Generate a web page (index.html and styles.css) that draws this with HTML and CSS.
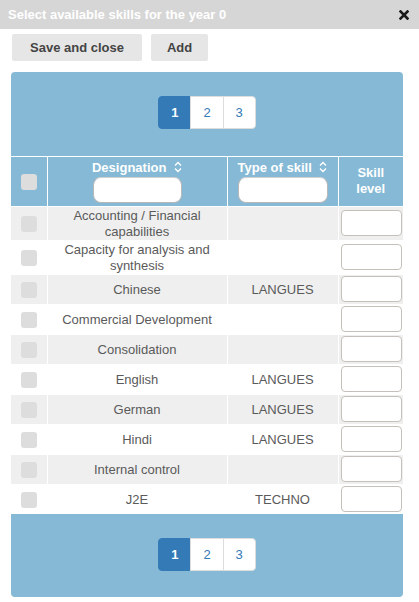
FILE: index.html
```html
<!DOCTYPE html>
<html>
<head>
<meta charset="utf-8">
<link rel="stylesheet" href="styles.css">
</head>
<body>
<div class="titlebar">
  <span class="title">Select available skills for the year 0</span>
  <svg class="close" width="10" height="10" viewBox="0 0 10 10"><path d="M1.5 1.5 L8.5 8.5 M8.5 1.5 L1.5 8.5" stroke="#1a1a1a" stroke-width="2.6" stroke-linecap="square"/></svg>
</div>
<div class="toolbar">
  <button class="btn btn-wide">Save and close</button>
  <button class="btn">Add</button>
</div>
<div class="wrap">
  <div class="pager-panel top">
    <div class="pagination">
      <span class="page active">1</span><span class="page">2</span><span class="page">3</span>
    </div>
  </div>
  <table class="grid">
    <colgroup><col class="c1"><col class="c2"><col class="c3"><col class="c4"></colgroup>
    <thead>
      <tr>
        <th class="chk"><span class="box"></span></th>
        <th><div class="lbl">Designation <svg class="sort" width="8" height="12" viewBox="0 0 8 12"><path d="M1 4.5 L4 1.5 L7 4.5 M1 7.5 L4 10.5 L7 7.5" stroke="#fff" stroke-width="1.4" fill="none"/></svg></div><input class="filter f1" type="text"></th>
        <th><div class="lbl">Type of skill <svg class="sort" width="8" height="12" viewBox="0 0 8 12"><path d="M1 4.5 L4 1.5 L7 4.5 M1 7.5 L4 10.5 L7 7.5" stroke="#fff" stroke-width="1.4" fill="none"/></svg></div><input class="filter f2" type="text"></th>
        <th class="lvl">Skill<br>level</th>
      </tr>
    </thead>
    <tbody>
      <tr><td class="chk"><span class="box"></span></td><td>Accounting / Financial capabilities</td><td></td><td class="inp"><input type="text"></td></tr>
      <tr><td class="chk"><span class="box"></span></td><td>Capacity for analysis and synthesis</td><td></td><td class="inp"><input type="text"></td></tr>
      <tr><td class="chk"><span class="box"></span></td><td>Chinese</td><td>LANGUES</td><td class="inp"><input type="text"></td></tr>
      <tr><td class="chk"><span class="box"></span></td><td>Commercial Development</td><td></td><td class="inp"><input type="text"></td></tr>
      <tr><td class="chk"><span class="box"></span></td><td>Consolidation</td><td></td><td class="inp"><input type="text"></td></tr>
      <tr><td class="chk"><span class="box"></span></td><td>English</td><td>LANGUES</td><td class="inp"><input type="text"></td></tr>
      <tr><td class="chk"><span class="box"></span></td><td>German</td><td>LANGUES</td><td class="inp"><input type="text"></td></tr>
      <tr><td class="chk"><span class="box"></span></td><td>Hindi</td><td>LANGUES</td><td class="inp"><input type="text"></td></tr>
      <tr><td class="chk"><span class="box"></span></td><td>Internal control</td><td></td><td class="inp"><input type="text"></td></tr>
      <tr><td class="chk"><span class="box"></span></td><td>J2E</td><td>TECHNO</td><td class="inp"><input type="text"></td></tr>
    </tbody>
  </table>
  <div class="pager-panel bottom">
    <div class="pagination">
      <span class="page active">1</span><span class="page">2</span><span class="page">3</span>
    </div>
  </div>
</div>
</body>
</html>
```
FILE: styles.css
```css
body {
  margin: 0;
  font-family: "Liberation Sans", Arial, sans-serif;
  font-size: 13px;
  background: #fff;
}
.titlebar {
  height: 29px;
  background: #d6d6d6;
  color: #fff;
  font-weight: bold;
  font-size: 13px;
  display: flex;
  align-items: center;
  justify-content: space-between;
  padding: 0 10px 0 8px;
}
.close { display: block; }
.toolbar {
  display: flex;
  gap: 9px;
  padding: 5px 12px 0;
}
.btn {
  height: 27px;
  padding: 0 16px;
  background: #e6e6e6;
  border: none;
  border-radius: 2px;
  color: #444;
  font-family: "Liberation Sans", Arial, sans-serif;
  font-weight: bold;
  font-size: 13px;
}
.btn-wide { padding: 0 18px; }
.wrap {
  width: 392px;
  margin: 11px 0 0 11px;
}
.pager-panel {
  background: #85b9d5;
}
.pager-panel.top {
  padding: 24px 0 27px;
  border-radius: 4px 4px 0 0;
  border-bottom: 1px solid #fff;
}
.pager-panel.bottom {
  padding: 24px 0 26px;
  border-radius: 0 0 4px 4px;
}
.pagination {
  display: flex;
  justify-content: center;
}
.page {
  display: block;
  padding: 6px 12px;
  line-height: 19px;
  font-size: 13px;
  color: #337ab7;
  background: #fff;
  border: 1px solid #ddd;
  margin-left: -1px;
}
.page:first-child { border-radius: 4px 0 0 4px; margin-left: 0; }
.page:last-child { border-radius: 0 4px 4px 0; }
.page.active {
  background: #337ab7;
  border-color: #337ab7;
  color: #fff;
  font-weight: bold;
}
.grid {
  width: 392px;
  border-collapse: collapse;
  border-style: hidden;
  table-layout: fixed;
}
.c1 { width: 36px; }
.c2 { width: 180px; }
.c3 { width: 111px; }
.c4 { width: 65px; }
.grid th, .grid td {
  border: 1px solid #fff;
  text-align: center;
}
.grid th {
  background: #85b9d5;
  color: #fff;
  font-weight: bold;
  padding: 3px 2px 3px;
  line-height: 16px;
  vertical-align: middle;
}
.grid th.lvl { line-height: 16px; padding-top: 2px; }
.lbl { line-height: 16px; height: 16px; }
.sort { vertical-align: -1px; margin-left: 4px; }
.filter {
  display: block;
  margin: 1px auto 0;
  height: 26px;
  box-sizing: border-box;
  border: 1px solid #b8b8b8;
  border-top-color: #d0d0d0;
  border-radius: 8px;
  background: #fff;
}
.f1 { width: 89px; }
.f2 { width: 90px; }
.grid td {
  color: #5a5a5a;
  padding: 1px 4px 0;
  line-height: 16px;
  vertical-align: middle;
}
.grid tbody tr:nth-child(odd) td { background: #efefef; }
.grid td.chk, .grid th.chk { padding: 0; }
.box {
  display: block;
  width: 16px;
  height: 16px;
  margin: 0 auto;
  background: #dcdddc;
  border-radius: 3px;
}
.grid td.inp { padding: 1px 0 2px 2px; text-align: left; }
.inp input {
  display: block;
  width: 61px;
  height: 26px;
  box-sizing: border-box;
  border: 1px solid #c5c0b9;
  border-radius: 4px;
  background: #fff;
  margin: 0;
}
```
